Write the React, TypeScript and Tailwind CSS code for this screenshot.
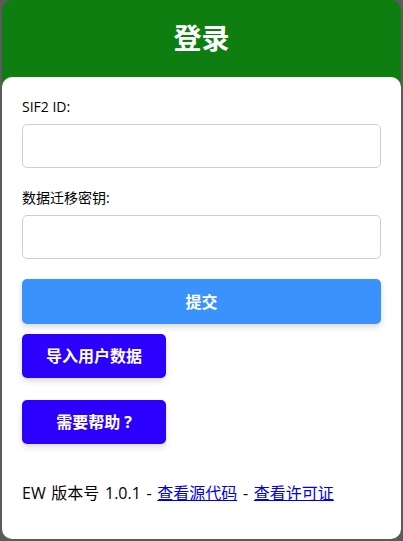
import React from "react";

// 登录页：绿色标题栏 + 白色表单卡片
const font = "font-['Open_Sans','Noto_Sans_CJK_SC',sans-serif]";

function Field({ label }: { label: string }) {
  return (
    <div className="flex flex-col">
      <label className="text-[14px] leading-[20px] text-black">{label}</label>
      <input
        type="text"
        className="mt-[7px] h-[44px] w-full rounded-[5px] border border-[#cfcfcf] bg-white px-3 text-[14px] outline-none"
      />
    </div>
  );
}

export default function App() {
  return (
    <div className={`min-h-screen bg-[#5b5b5b] px-[2px] pb-[2px] ${font}`}>
      <div className="flex h-[539px] flex-col rounded-[10px] bg-[#0e7e11]">
        <header className="flex h-[77px] items-center justify-center pb-[1px]">
          <h1 className="text-[28px] font-bold leading-none text-white">登录</h1>
        </header>
        <main className="flex flex-1 flex-col rounded-[10px] bg-white px-5 pt-[20px]">
          <Field label="SIF2 ID:" />
          <div className="mt-[20px]">
            <Field label="数据迁移密钥:" />
          </div>
          <button className="mt-[20px] h-[45px] w-full rounded-[5px] bg-[#3a92fd] text-[16px] font-bold text-white shadow-[0_3px_6px_rgba(0,0,0,0.15)]">
            提交
          </button>
          <div className="mt-[10px] flex flex-col items-start gap-[22px]">
            <button className="h-[44px] w-[144px] rounded-[5px] bg-[#2b00ff] text-[16px] font-bold text-white shadow-[0_3px_6px_rgba(0,0,0,0.15)]">
              导入用户数据
            </button>
            <button className="h-[44px] w-[144px] rounded-[5px] bg-[#2b00ff] text-[16px] font-bold text-white shadow-[0_3px_6px_rgba(0,0,0,0.15)]">
              需要帮助<span className="ml-[4px]">?</span>
            </button>
          </div>
          <p className="mt-[37px] text-[16px] leading-[24px] text-black [word-spacing:1.5px]">
            EW 版本号 1.0.1 -{" "}
            <a href="#" className="text-[#0000ee] underline">
              查看源代码
            </a>{" "}
            -{" "}
            <a href="#" className="text-[#0000ee] underline">
              查看许可证
            </a>
          </p>
        </main>
      </div>
    </div>
  );
}
